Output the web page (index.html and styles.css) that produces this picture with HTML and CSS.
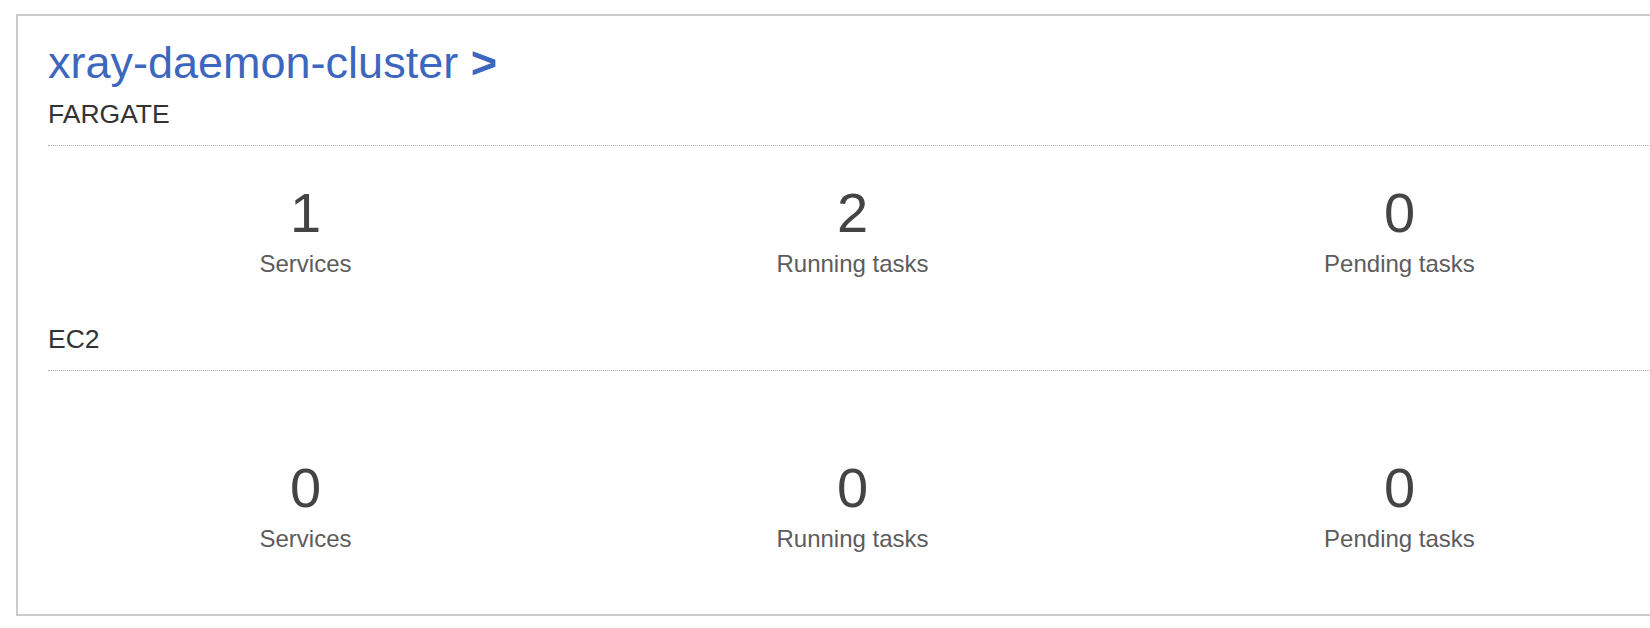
FILE: index.html
```html
<!DOCTYPE html>
<html>
  <head>
    <meta charset="UTF-8">
    <title>xray-daemon-cluster</title>
    <link rel="stylesheet" href="styles.css">
  </head>
  <body>

    <div class="card">
      <h1 class="title"><a href="javascript:;">xray-daemon-cluster <b>&gt;</b></a></h1>

      <div class="launch-type">FARGATE</div>
      <div class="stats">
        <div class="stat">
          <div class="num">1</div>
          <div class="label">Services</div>
        </div>
        <div class="stat">
          <div class="num">2</div>
          <div class="label">Running tasks</div>
        </div>
        <div class="stat">
          <div class="num">0</div>
          <div class="label">Pending tasks</div>
        </div>
      </div>

      <div class="launch-type ec2">EC2</div>
      <div class="stats stats-ec2">
        <div class="stat">
          <div class="num">0</div>
          <div class="label">Services</div>
        </div>
        <div class="stat">
          <div class="num">0</div>
          <div class="label">Running tasks</div>
        </div>
        <div class="stat">
          <div class="num">0</div>
          <div class="label">Pending tasks</div>
        </div>
      </div>
    </div>

  </body>
</html>
```

FILE: styles.css
```css
* {
  margin: 0;
  padding: 0;
}

html,
body {
  background-color: #fff;
  overflow: hidden;
}

body {
  font-family: "Liberation Sans", Arial, Helvetica, sans-serif;
  color: #333;
}

.card {
  margin: 14px 0 0 16px;
  width: 1700px;
  border: 2px solid #ccc;
  border-right: 0;
  padding: 23px 0 61px 30px;
}

.title {
  font-size: 45px;
  line-height: 48px;
  font-weight: normal;
}

.title a {
  color: #3d67be;
  text-decoration: none;
}

.title b {
  font-weight: bold;
}

.launch-type {
  margin-top: 12px;
  font-size: 26.5px;
  line-height: 30px;
  color: #333;
  padding-bottom: 16px;
  border-bottom: 1px dotted #aaa;
}

.launch-type.ec2 {
  margin-top: 46px;
}

.stats {
  display: grid;
  grid-template-columns: repeat(3, 547px);
  margin-left: -16px;
  padding-top: 35px;
}

.stats-ec2 {
  padding-top: 85px;
}

.stat {
  text-align: center;
  padding: 0 15px;
}

.num {
  font-size: 56px;
  line-height: 64px;
  color: #444;
}

.label {
  margin-top: 5px;
  font-size: 24px;
  line-height: 28px;
  color: #5c5c5c;
}
```
